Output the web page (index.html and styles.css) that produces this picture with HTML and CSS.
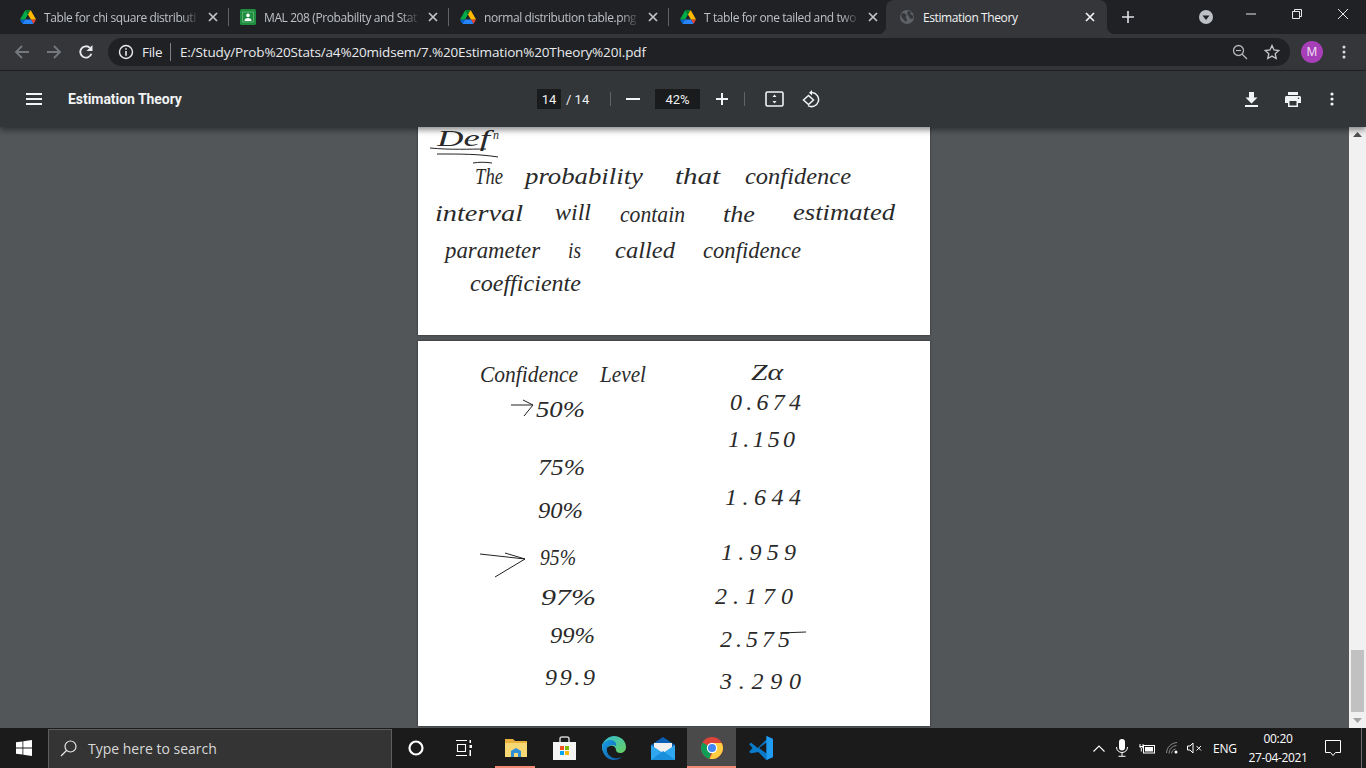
FILE: index.html
```html
<!DOCTYPE html>
<html lang="en">
<head>
<meta charset="utf-8">
<title>Estimation Theory</title>
<link rel="stylesheet" href="styles.css">
</head>
<body>
<svg class="defs" width="0" height="0" aria-hidden="true">
  <symbol id="drive" viewBox="0 0 87.3 78">
    <path d="m6.6 66.85 3.85 6.65c.8 1.4 1.95 2.5 3.3 3.3l13.75-23.8h-27.5c0 1.55.4 3.1 1.2 4.5z" fill="#0066da"/>
    <path d="m43.65 25-13.75-23.8c-1.35.8-2.5 1.9-3.3 3.3l-25.4 44a9.06 9.06 0 0 0 -1.2 4.5h27.5z" fill="#00ac47"/>
    <path d="m73.55 76.8c1.35-.8 2.5-1.9 3.3-3.3l1.6-2.75 7.65-13.25c.8-1.4 1.2-2.95 1.2-4.5h-27.502l5.852 11.5z" fill="#ea4335"/>
    <path d="m43.65 25 13.75-23.8c-1.35-.8-2.9-1.2-4.5-1.2h-18.5c-1.6 0-3.15.45-4.5 1.2z" fill="#00832d"/>
    <path d="m59.8 53h-32.3l-13.75 23.8c1.35.8 2.9 1.2 4.5 1.2h50.8c1.6 0 3.15-.45 4.5-1.2z" fill="#2684fc"/>
    <path d="m73.4 26.5-12.7-22c-.8-1.4-1.95-2.5-3.3-3.3l-13.75 23.8 16.15 28h27.45c0-1.55-.4-3.1-1.2-4.5z" fill="#ffba00"/>
  </symbol>
  <symbol id="close" viewBox="0 0 10 10">
    <path d="M1 1l8 8M9 1l-8 8" stroke="currentColor" stroke-width="1.7" fill="none"/>
  </symbol>
</svg>

<header class="tabstrip">
  <div class="tab">
    <svg class="fav" width="16" height="14"><use href="#drive"/></svg>
    <span class="tab-title">Table for chi square distributi</span>
    <svg class="tab-x" width="10" height="10"><use href="#close"/></svg>
  </div>
  <i class="tab-sep"></i>
  <div class="tab">
    <svg class="fav" width="16" height="16" viewBox="0 0 16 16"><rect width="16" height="16" rx="1.5" fill="#1e8e3e"/><rect x="2.5" y="3" width="11" height="10" fill="#1e8e3e" stroke="#7fc497" stroke-width=".6"/><circle cx="8" cy="6.4" r="1.8" fill="#fff"/><path d="M4.5 12c0-2.2 1.6-3 3.500-3s3.500.8 3.500 3z" fill="#fff"/></svg>
    <span class="tab-title">MAL 208 (Probability and Stat</span>
    <svg class="tab-x" width="10" height="10"><use href="#close"/></svg>
  </div>
  <i class="tab-sep"></i>
  <div class="tab">
    <svg class="fav" width="16" height="14"><use href="#drive"/></svg>
    <span class="tab-title">normal distribution table.png</span>
    <svg class="tab-x" width="10" height="10"><use href="#close"/></svg>
  </div>
  <i class="tab-sep"></i>
  <div class="tab">
    <svg class="fav" width="16" height="14"><use href="#drive"/></svg>
    <span class="tab-title">T table for one tailed and two</span>
    <svg class="tab-x" width="10" height="10"><use href="#close"/></svg>
  </div>
  <div class="tab tab-active">
    <svg class="fav" width="16" height="16" viewBox="0 0 16 16"><circle cx="8" cy="8" r="7" fill="#5f6368"/><path d="M3 4l3 .5 1.500 2-1 1.500 1.500 2.500-1 2.500L4 10 2 7zM9 2l3.500 1-1.500 2 2 1 1.500 1-1 3-2.500-.5-1.500-3L8 5z" fill="#35363a"/></svg>
    <span class="tab-title">Estimation Theory</span>
    <svg class="tab-x" width="10" height="10"><use href="#close"/></svg>
  </div>
  <svg class="new-tab" width="12" height="12" viewBox="0 0 12 12"><path d="M6 0v12M0 6h12" stroke="#dee1e6" stroke-width="1.600"/></svg>
  <svg class="tab-search" width="14" height="14" viewBox="0 0 14 14"><circle cx="7" cy="7" r="7" fill="#bdc1c6"/><path d="M3.500 5.500h7L7 10z" fill="#202124"/></svg>
  <div class="win-controls">
    <div class="win-btn"><svg width="10" height="10" viewBox="0 0 10 10"><path d="M0 5h10" stroke="#e8e8e8"/></svg></div>
    <div class="win-btn"><svg width="10" height="10" viewBox="0 0 10 10"><path d="M.5 2.500h7v7h-7zM2.500 2.500v-2h7v7h-2" stroke="#e8e8e8" fill="none"/></svg></div>
    <div class="win-btn"><svg width="10" height="10" viewBox="0 0 10 10"><path d="M0 0l10 10M10 0L0 10" stroke="#e8e8e8"/></svg></div>
  </div>
</header>

<nav class="toolbar">
  <div class="tb-btn"><svg width="16" height="16" viewBox="0 0 16 16"><path d="M15 8H2M8 2L2 8l6 6" stroke="#74777b" stroke-width="1.800" fill="none"/></svg></div>
  <div class="tb-btn"><svg width="16" height="16" viewBox="0 0 16 16"><path d="M1 8h13M8 2l6 6-6 6" stroke="#74777b" stroke-width="1.800" fill="none"/></svg></div>
  <div class="tb-btn"><svg width="16" height="16" viewBox="0 0 16 16"><path d="M13.400 9.800A5.700 5.700 0 1 1 12 3.900" stroke="#e8eaed" stroke-width="1.800" fill="none"/><path d="M14.500 1v6h-6z" fill="#e8eaed"/></svg></div>
  <div class="omnibox">
    <svg class="info" width="16" height="16" viewBox="0 0 16 16"><circle cx="8" cy="8" r="6.500" stroke="#e8eaed" stroke-width="1.400" fill="none"/><path d="M7.200 7h1.600v4.800H7.200zM7.200 4.200h1.600v1.600H7.200z" fill="#e8eaed"/></svg>
    <span class="scheme">File</span>
    <i class="omni-sep"></i>
    <span class="url">E:/Study/Prob%20Stats/a4%20midsem/7.%20Estimation%20Theory%20I.pdf</span>
    <div class="omni-right">
      <svg width="16" height="16" viewBox="0 0 16 16"><circle cx="6.500" cy="6.500" r="5" stroke="#b4b7ba" stroke-width="1.300" fill="none"/><path d="M10 10l5 5" stroke="#b4b7ba" stroke-width="1.300"/><path d="M4 6.500h5" stroke="#b4b7ba" stroke-width="1.200"/></svg>
      <svg width="16" height="16" viewBox="0 0 16 16"><path d="M8 1.500l2 4.500 4.800.5-3.600 3.200 1 4.800L8 12.100l-4.200 2.400 1-4.800L1.200 6.500 6 6z" stroke="#c4c7ca" stroke-width="1.300" fill="none"/></svg>
    </div>
  </div>
  <div class="tb-btn tb-avatar"><span class="avatar">M</span></div>
  <div class="tb-btn"><svg width="4" height="14" viewBox="0 0 4 14"><circle cx="2" cy="2" r="1.500" fill="#dadce0"/><circle cx="2" cy="7" r="1.500" fill="#dadce0"/><circle cx="2" cy="12" r="1.500" fill="#dadce0"/></svg></div>
</nav>

<section class="pdfbar">
  <div class="pdf-left">
    <svg class="menu" width="16" height="12" viewBox="0 0 16 12"><path d="M0 1h16M0 6h16M0 11h16" stroke="#f1f3f4" stroke-width="2"/></svg>
    <span class="pdf-title">Estimation Theory</span>
  </div>
  <span class="page-box">14</span>
  <span class="page-total">/ 14</span>
  <i class="pdf-sep first"></i>
  <svg class="minus" width="14" height="2" viewBox="0 0 14 2"><path d="M0 1h14" stroke="#f1f3f4" stroke-width="2"/></svg>
  <span class="zoom-box">42%</span>
  <svg class="plus" width="12" height="12" viewBox="0 0 12 12"><path d="M6 0v12M0 6h12" stroke="#f1f3f4" stroke-width="2"/></svg>
  <i class="pdf-sep second"></i>
  <svg class="fit" width="19" height="16" viewBox="0 0 19 16"><rect x="1" y="1" width="17" height="14" rx="1.500" stroke="#f1f3f4" stroke-width="1.600" fill="none"/><path d="M9.500 3.500l2 2.500h-4zM9.500 12.500l2-2.500h-4z" fill="#f1f3f4"/></svg>
  <svg class="rotate" width="18" height="18" viewBox="0 0 18 18"><path d="M10 2.600a7 7 0 1 1-4 13" stroke="#f1f3f4" stroke-width="1.500" fill="none"/><path d="M10 0v5.500L7 2.700z" fill="#f1f3f4"/><path d="M6.500 5.500L1.500 10l5 4.500 5-4.500z" stroke="#f1f3f4" stroke-width="1.500" fill="none"/></svg>
  <div class="pdf-right">
    <svg class="dl" width="13" height="15" viewBox="0 0 13 15"><path d="M4 0h5v5.500h3.500L6.500 11.500.5 5.500H4z" fill="#f1f3f4"/><path d="M0 14h13" stroke="#f1f3f4" stroke-width="2"/></svg>
    <svg class="pr" width="16" height="15" viewBox="0 0 16 15"><path d="M3 0h10v3H3zM1.500 4h13c.8 0 1.500.7 1.500 1.500V11h-3v4H3v-4H0V5.500C0 4.700.7 4 1.500 4z" fill="#f1f3f4"/><path d="M4.500 9h7v4.500h-7z" fill="#323639"/><circle cx="13.500" cy="6.200" r=".8" fill="#323639"/></svg>
    <svg width="4" height="14" viewBox="0 0 4 14"><circle cx="2" cy="2" r="1.600" fill="#f1f3f4"/><circle cx="2" cy="7" r="1.600" fill="#f1f3f4"/><circle cx="2" cy="12" r="1.600" fill="#f1f3f4"/></svg>
  </div>
</section>

<main class="main">
  <div class="viewer">
    <article class="page page-one">
      <svg class="sheet" width="512" height="208" viewBox="0 0 512 208">
        <text class="hw" x="19" y="19" textLength="53" lengthAdjust="spacingAndGlyphs">Def</text>
        <text class="hw-small" x="75" y="12">n</text>
        <path class="pen" d="M12 21c20 2 40 1 56 1M19 27c25 0 42 0 61 3M55 36c6-1 12-1 19 0"/>
        <text class="hw" x="57" y="57" textLength="28" lengthAdjust="spacingAndGlyphs">The</text>
        <text class="hw" x="107" y="57" textLength="118" lengthAdjust="spacingAndGlyphs">probability</text>
        <text class="hw" x="257" y="57" textLength="45" lengthAdjust="spacingAndGlyphs">that</text>
        <text class="hw" x="327" y="57" textLength="106" lengthAdjust="spacingAndGlyphs">confidence</text>
        <text class="hw" x="17" y="94" textLength="88" lengthAdjust="spacingAndGlyphs">interval</text>
        <text class="hw" x="137" y="93" textLength="36" lengthAdjust="spacingAndGlyphs">will</text>
        <text class="hw" x="202" y="95" textLength="65" lengthAdjust="spacingAndGlyphs">contain</text>
        <text class="hw" x="305" y="95" textLength="32" lengthAdjust="spacingAndGlyphs">the</text>
        <text class="hw" x="375" y="93" textLength="102" lengthAdjust="spacingAndGlyphs">estimated</text>
        <text class="hw" x="27" y="131" textLength="95" lengthAdjust="spacingAndGlyphs">parameter</text>
        <text class="hw" x="150" y="131" textLength="13" lengthAdjust="spacingAndGlyphs">is</text>
        <text class="hw" x="197" y="131" textLength="60" lengthAdjust="spacingAndGlyphs">called</text>
        <text class="hw" x="285" y="131" textLength="98" lengthAdjust="spacingAndGlyphs">confidence</text>
        <text class="hw" x="52" y="164" textLength="111" lengthAdjust="spacingAndGlyphs">coefficiente</text>
      </svg>
    </article>
    <article class="page page-two">
      <svg class="sheet" width="512" height="385" viewBox="0 0 512 385">
        <text class="hw" x="62" y="41" textLength="98" lengthAdjust="spacingAndGlyphs">Confidence</text>
        <text class="hw" x="182" y="41" textLength="46" lengthAdjust="spacingAndGlyphs">Level</text>
        <text class="hw" x="333" y="39" textLength="32" lengthAdjust="spacingAndGlyphs">Zα</text>
        <path class="pen" d="M93 64l22 0M105 59l10 5-9 11"/>
        <text class="hw" x="118" y="76" textLength="49" lengthAdjust="spacingAndGlyphs">50%</text>
        <text class="hw" x="312" y="69" textLength="71">0.674</text>
        <text class="hw" x="310" y="106" textLength="67">1.150</text>
        <text class="hw" x="120" y="134" textLength="47" lengthAdjust="spacingAndGlyphs">75%</text>
        <text class="hw" x="120" y="177" textLength="45" lengthAdjust="spacingAndGlyphs">90%</text>
        <text class="hw" x="307" y="164" textLength="76">1.644</text>
        <path class="pen" d="M62 213l45 5M87 212l20 6-30 18"/>
        <text class="hw" x="122" y="224" textLength="36" lengthAdjust="spacingAndGlyphs">95%</text>
        <text class="hw" x="303" y="219" textLength="75">1.959</text>
        <text class="hw" x="123" y="264" textLength="55" lengthAdjust="spacingAndGlyphs">97%</text>
        <text class="hw" x="297" y="263" textLength="78">2.170</text>
        <text class="hw" x="132" y="302" textLength="45" lengthAdjust="spacingAndGlyphs">99%</text>
        <text class="hw" x="302" y="306" textLength="70">2.575</text>
        <path class="pen" d="M362 292l26-1"/>
        <text class="hw" x="127" y="344" textLength="50">99.9</text>
        <text class="hw" x="302" y="348" textLength="81">3.290</text>
      </svg>
    </article>
  </div>
  <aside class="scrollbar">
    <svg class="sb-arrow" width="9" height="5" viewBox="0 0 9 5"><path d="M4.500 0l4.500 5H0z" fill="#505050"/></svg>
    <div class="sb-track"><div class="sb-thumb"></div></div>
    <svg class="sb-arrow" width="9" height="5" viewBox="0 0 9 5"><path d="M0 0h9L4.500 5z" fill="#a3a3a3"/></svg>
  </aside>
</main>

<footer class="taskbar">
  <div class="start"><svg width="16" height="16" viewBox="0 0 16 16"><path d="M0 2.300l6.500-.9v6.200H0zM7.300 1.300L16 0v7.600H7.300zM0 8.400h6.500v6.200L0 13.700zM7.300 8.400H16V16l-8.700-1.200z" fill="#fff"/></svg></div>
  <div class="search">
    <svg width="17" height="17" viewBox="0 0 17 17"><circle cx="10.500" cy="6.500" r="5.500" stroke="#e6e6e6" stroke-width="1.200" fill="none"/><path d="M6.500 10.500L1 16" stroke="#e6e6e6" stroke-width="1.300"/></svg>
    <span>Type here to search</span>
  </div>
  <div class="tk-btn tk-sys"><svg width="16" height="16" viewBox="0 0 16 16"><circle cx="8" cy="8" r="6.500" stroke="#fff" stroke-width="2.200" fill="none"/></svg></div>
  <div class="tk-btn tk-sys"><svg width="16" height="16" viewBox="0 0 16 16"><path d="M0 .5h11M0 15.500h11M1.500 4.500h8v7h-8z" stroke="#fff" stroke-width="1.100" fill="none"/><path d="M13.500 0h1.500v3h-1.500zM13.500 5h2.500v3h-2.500zM13.500 10h1.500v6h-1.500z" fill="#fff"/></svg></div>
  <div class="tk-apps">
    <div class="tk-btn tk-running"><svg width="22" height="20" viewBox="0 0 22 20"><path d="M0 1h8l2 2h12v16H0z" fill="#e8b23c"/><path d="M0 5h22v14H0z" fill="#f8d775"/><path d="M6 19v-6l5-3 5 3v6h-3v-4H9v4z" fill="#2e8fd8"/></svg></div>
    <div class="tk-btn"><svg width="23" height="24" viewBox="0 0 23 24"><path d="M7 7V3c0-1 1-2 2-2h5c1 0 2 1 2 2v4" stroke="#d0d0d0" stroke-width="1.500" fill="none"/><path d="M0 6h23v18H0z" fill="#f5f5f5"/><path d="M7 10h4v4H7z" fill="#f25022"/><path d="M12 10h4v4h-4z" fill="#7fba00"/><path d="M7 15h4v4H7z" fill="#00a4ef"/><path d="M12 15h4v4h-4z" fill="#ffb900"/></svg></div>
    <div class="tk-btn"><svg width="24" height="24" viewBox="0 0 24 24"><defs><linearGradient id="edge1" x1="0" y1="0" x2="1" y2="1"><stop offset="0" stop-color="#1b9de2"/><stop offset="1" stop-color="#0c59a4"/></linearGradient><linearGradient id="edge2" x1="0" y1="0" x2="1" y2="1"><stop offset="0" stop-color="#33bdd8"/><stop offset="1" stop-color="#6ad15a"/></linearGradient></defs><path d="M12 0c7 0 12 5 12 11 0 4-3 6-6 6-2 0-4-1-4-3 0-3-3-5-6-4C4 11 2 14 3 18 0 15 0 11 0 9c2-5 7-9 12-9z" fill="url(#edge2)"/><path d="M0 10c1-4 5-6 8.500-6C13 4 15 8 14 10c-3-2-7-1-9 2-1 4 2 9 7 10 3 .5 6 0 8-1-2 2-5 3-8 3C5 24 0 18 0 10z" fill="url(#edge1)"/></svg></div>
    <div class="tk-btn"><svg width="24" height="23" viewBox="0 0 24 23"><path d="M12 0l12 8v2H0V8z" fill="#0b5fb4"/><path d="M3 6h18v6l-9 5-9-5z" fill="#f0f0f0"/><path d="M0 8l12 8 12-8v15H0z" fill="#30a8f0"/><path d="M0 23l12-9 12 9z" fill="#1a90dc"/></svg></div>
    <div class="tk-btn tk-active tk-running"><svg width="22" height="22" viewBox="0 0 22 22"><circle cx="11" cy="11" r="11" fill="#db4437"/><path d="M11 11L1.500 5.500A11 11 0 0 0 8.500 21.700z" fill="#0f9d58"/><path d="M11 6h9.700A11 11 0 0 1 8.500 21.700L13 13z" fill="#ffcd40"/><circle cx="11" cy="11" r="5.200" fill="#fff"/><circle cx="11" cy="11" r="4" fill="#4285f4"/></svg></div>
    <div class="tk-btn"><svg width="24" height="24" viewBox="0 0 24 24"><path d="M17.500 0L24 3v18l-6.500 3L7 13.500l10.500-10z" fill="#0a7acb"/><path d="M17.500 6.500L10 12l7.500 5.500z" fill="#1b1b1b"/><path d="M17.500 0v24L24 21V3z" fill="#1f9cf0"/><path d="M0 8l2.200-1.300L17.500 19v5L9.500 16 2.200 17.300 0 16l3.500-4z" fill="#0a7acb"/></svg></div>
  </div>
  <div class="tray">
    <svg class="t-chev" width="12" height="7" viewBox="0 0 12 7"><path d="M.5 6.500L6 1l5.500 5.500" stroke="#fff" stroke-width="1.100" fill="none"/></svg>
    <svg class="t-mic" width="12" height="18" viewBox="0 0 12 18"><rect x="3" y="0" width="6" height="11.500" rx="3" fill="#fff"/><path d="M.5 8c0 3.500 2.500 5.500 5.500 5.500s5.500-2 5.500-5.500M6 13.500V17M2.500 17.300h7" stroke="#fff" fill="none"/></svg>
    <svg class="t-batt" width="16" height="11" viewBox="0 0 16 11"><path d="M.5 3.500h3.500M1 1v2.500c0 1 .8 1.800 1.500 1.800S4 4.500 4 3.500V1M2.300 5.500v3" stroke="#fff" fill="none"/><rect x="4.500" y="2.500" width="11" height="7.500" fill="none" stroke="#fff"/><rect x="6" y="4" width="8" height="4.500" fill="#fff"/></svg>
    <svg class="t-wifi" width="12" height="12" viewBox="0 0 12 12"><path d="M.5 11C.8 5.500 5 1 11 .5M3 11.500C3.300 7.500 6 4 10.500 3.500M5.500 11.500c.2-2 1.500-4 4-4.500" stroke="#8b8b8b" fill="none"/><circle cx="10" cy="10" r="1.500" fill="#fff"/></svg>
    <svg class="t-spk" width="15" height="12" viewBox="0 0 15 12"><path d="M.5 4v4h2.500l3 3V1L3 4z" stroke="#fff" fill="none"/><path d="M9.500 4l4.500 4.500M14 4l-4.500 4.500" stroke="#fff" fill="none"/></svg>
    <span class="t-lang">ENG</span>
    <div class="t-clock"><span>00:20</span><span>27-04-2021</span></div>
    <svg class="t-note" width="16" height="16" viewBox="0 0 16 16"><path d="M.5.500h15v12h-5L8 15.500 5.500 12.500h-5z" stroke="#fff" fill="none"/></svg>
    <i class="t-peek"></i>
  </div>
</footer>
</body>
</html>
```

FILE: styles.css
```css
* { box-sizing: border-box; }
html, body { margin: 0; height: 100%; }
body {
  width: 1366px;
  height: 768px;
  overflow: hidden;
  display: flex;
  flex-direction: column;
  background: #525659;
  font-family: "Open Sans", "Noto Sans", sans-serif;
}
.defs { display: block; height: 0; }
svg { flex: none; display: block; }
i { display: block; flex: none; }

/* tab strip */
.tabstrip {
  height: 34px;
  flex: none;
  display: flex;
  align-items: center;
  padding-left: 9px;
  background: #202124;
}
.tab {
  width: 219px;
  height: 34px;
  flex: none;
  display: flex;
  align-items: center;
  padding: 0 10px 0 11px;
  color: #bdc1c6;
}
.tab-sep { width: 1px; height: 18px; background: #5f6368; }
.fav { margin-right: 8px; }
.tab-title {
  flex: 1;
  min-width: 0;
  overflow: hidden;
  white-space: nowrap;
  font-size: 12px;
  letter-spacing: -.4px;
  -webkit-mask-image: linear-gradient(to right, #000 88%, transparent);
  mask-image: linear-gradient(to right, #000 88%, transparent);
}
.tab-x { margin-left: 8px; color: #c4c7ca; }
.tab-active {
  width: 221px;
  margin-left: -2px;
  position: relative;
  background: #35363a;
  border-radius: 8px 8px 0 0;
  color: #f1f3f4;
  padding: 0 12px 0 13px;
}
.tab-active .tab-title { -webkit-mask-image: none; mask-image: none; }
.tab-active .tab-x { color: #f1f3f4; }
.tab-active::before,
.tab-active::after {
  content: "";
  position: absolute;
  bottom: 0;
  width: 8px;
  height: 8px;
}
.tab-active::before { left: -8px; background: radial-gradient(circle at 0 0, transparent 8px, #35363a 8.500px); }
.tab-active::after { right: -8px; background: radial-gradient(circle at 100% 0, transparent 8px, #35363a 8.500px); }
.new-tab { margin-left: 15px; }
.tab-search { margin-left: 65px; }
.win-controls { margin-left: auto; display: flex; height: 28px; align-self: flex-start; }
.win-btn { width: 46px; height: 28px; display: flex; align-items: center; justify-content: center; }

/* browser toolbar */
.toolbar {
  height: 37px;
  flex: none;
  display: flex;
  align-items: center;
  padding: 0 0 1px 6px;
  background: #35363a;
  border-bottom: 1px solid #202124;
}
.tb-btn { width: 32px; height: 28px; display: flex; align-items: center; justify-content: center; flex: none; }
.omnibox {
  width: 1182px;
  height: 28px;
  margin-left: 6px;
  display: flex;
  align-items: center;
  padding: 0 10px;
  border-radius: 14px;
  background: #202124;
  color: #e8eaed;
  font-size: 13.500px;
}
.info { margin-right: 8px; }
.scheme { width: 20px; white-space: nowrap; letter-spacing: -.3px; }
.omni-sep { width: 1px; height: 18px; background: #7b7e82; margin: 0 9px 0 8px; }
.url { white-space: nowrap; letter-spacing: -.16px; }
.omni-right { margin-left: auto; display: flex; gap: 16px; align-items: center; }
.tb-avatar { margin-left: 6px; }
.avatar {
  width: 22px;
  height: 22px;
  display: flex;
  align-items: center;
  justify-content: center;
  border-radius: 50%;
  background: #a63fb8;
  color: #f3e6f6;
  font-size: 12px;
}

/* pdf toolbar */
.pdfbar {
  height: 56px;
  flex: none;
  position: relative;
  z-index: 2;
  display: flex;
  align-items: center;
  background: #323639;
  color: #f1f3f4;
  font-family: Roboto, "Liberation Sans", sans-serif;
  font-size: 13px;
  box-shadow: 0 3px 6px rgba(0, 0, 0, .45);
}
.pdf-left { width: 537px; flex: none; display: flex; align-items: center; padding-left: 26px; }
.pdf-title { margin-left: 26px; font-size: 14px; font-weight: 700; letter-spacing: -.05px; color: #f1f3f4; }
.page-box, .zoom-box {
  height: 20px;
  flex: none;
  display: flex;
  align-items: center;
  justify-content: center;
  background: #191b1c;
}
.page-box { width: 24px; }
.page-total { width: 24px; margin-left: 5px; white-space: nowrap; }
.pdf-sep { width: 1px; height: 14px; background: #5f6366; }
.pdf-sep.first { margin-left: 20px; }
.pdf-sep.second { margin-left: 16px; }
.minus { margin-left: 15px; }
.zoom-box { width: 45px; margin-left: 15px; }
.plus { margin-left: 16px; }
.fit { margin-left: 20px; }
.rotate { margin-left: 18px; }
.pdf-right { margin-left: auto; display: flex; align-items: center; padding-right: 32px; }
.dl { margin-right: 27px; }
.pr { margin-right: 29px; }

/* document */
.main { flex: 1; min-height: 0; display: flex; overflow: hidden; }
.viewer {
  flex: 1;
  min-width: 0;
  display: flex;
  flex-direction: column;
  align-items: center;
  gap: 6px;
  padding-right: 1px;
  overflow: hidden;
  background: #525659;
}
.page { width: 512px; flex: none; background: #fff; box-shadow: 0 0 2px rgba(0, 0, 0, .5); }
.page-one { height: 208px; }
.page-two { height: 385px; }
.hw {
  font-family: "Liberation Serif", serif;
  font-style: italic;
  font-size: 24px;
  fill: #2a2a2a;
}
.hw-small {
  font-family: "Liberation Serif", serif;
  font-style: italic;
  font-size: 12px;
  fill: #2a2a2a;
}
.pen { fill: none; stroke: #222; stroke-width: 1; }
.scrollbar {
  width: 17px;
  flex: none;
  display: flex;
  flex-direction: column;
  align-items: center;
  background: #f1f1f1;
  padding: 5px 0;
}
.sb-track { flex: 1; width: 100%; display: flex; flex-direction: column; justify-content: flex-end; padding: 0 2px 6px; }
.sb-thumb { height: 62px; background: #c1c1c1; }

/* taskbar */
.taskbar {
  height: 40px;
  flex: none;
  position: relative;
  z-index: 3;
  display: flex;
  align-items: center;
  background: #1b1b1b;
  color: #fff;
}
.start { width: 48px; height: 40px; flex: none; display: flex; align-items: center; justify-content: center; }
.search {
  width: 344px;
  height: 39px;
  flex: none;
  align-self: flex-end;
  display: flex;
  align-items: center;
  gap: 11px;
  padding: 0 0 1px 11px;
  background: #343434;
  border: 1px solid #5e5e5e;
  border-bottom: 0;
  color: #d9d9d9;
  font-size: 14px;
}
.tk-btn { width: 49px; height: 40px; flex: none; display: flex; align-items: center; justify-content: center; position: relative; }
.tk-sys { width: 48px; }
.tk-apps { display: flex; margin-left: 3px; }
.tk-active { background: #4a4a4a; }
.tk-running::after {
  content: "";
  position: absolute;
  left: 4px;
  right: 5px;
  bottom: 0;
  height: 2px;
  background: #f28b74;
}
.tk-active::after { left: 0; right: 0; }
.tray { margin-left: auto; display: flex; align-items: center; height: 40px; }
.t-chev { margin-right: 11px; }
.t-mic { margin-right: 11px; }
.t-batt { margin-right: 11px; }
.t-wifi { margin-right: 9px; }
.t-spk { margin-right: 11px; }
.t-lang { font-size: 12px; width: 23px; white-space: nowrap; letter-spacing: -.2px; }
.t-clock {
  width: 70px;
  margin-left: 7px;
  display: flex;
  flex-direction: column;
  align-items: center;
  gap: 2px;
  font-size: 12px;
  line-height: 17px;
  letter-spacing: -.35px;
}
.t-note { margin-left: 12px; }
.t-peek { width: 1px; height: 40px; background: #6a6a6a; margin-left: 20px; margin-right: 4px; }
```
